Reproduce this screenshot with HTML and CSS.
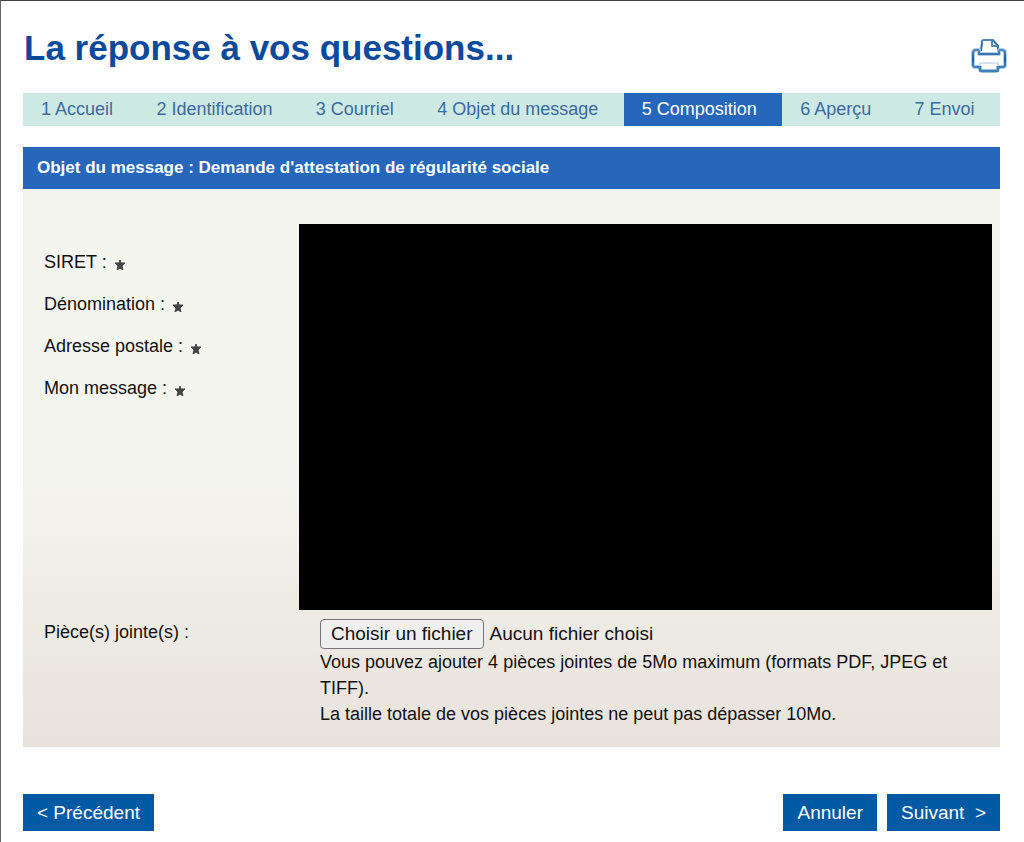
FILE: index.html
```html
<!DOCTYPE html>
<html lang="fr">
<head>
    <meta charset="UTF-8">
    <meta name="viewport" content="width=device-width, initial-scale=1.0">
    <title>La réponse à vos questions...</title>
    <link rel="stylesheet" href="styles.css">
</head>
<body>

    <div class="header">
        <h1>La réponse à vos questions...</h1>
        <button type="button" class="print" aria-label="Imprimer" onclick="window.print()">
            <svg width="36" height="36" viewBox="0 0 36 36" fill="none" stroke-linejoin="round">
                <defs>
                    <linearGradient id="ink" x1="0" y1="0" x2="0" y2="1">
                        <stop offset="0" stop-color="#5187bb"/>
                        <stop offset="0.5" stop-color="#1e609c"/>
                        <stop offset="1" stop-color="#3f80b8"/>
                    </linearGradient>
                </defs>
                <path d="M10 13 L11 4 Q11 2 13 2 H22 L27 8 V13" fill="#fff" stroke="url(#ink)" stroke-width="2"/>
                <path d="M21 3 V8 H27" stroke="#5187bb" stroke-width="2"/>
                <path d="M9 29 H4 Q2 29 2 27 V15 Q2 12 5 12 H7 Q8 12 8 14 V16 H28 V14 Q28 12 29 12 H31 Q34 12 34 15 V27 Q34 29 32 29 H27" stroke="#b4cfe6" stroke-width="4"/>
                <path d="M9 29 H4 Q2 29 2 27 V15 Q2 12 5 12 H7 Q8 12 8 14 V16 H28 V14 Q28 12 29 12 H31 Q34 12 34 15 V27 Q34 29 32 29 H27" stroke="url(#ink)" stroke-width="2"/>
                <path d="M9 25 H27 V31 Q27 33 25 33 H11 Q9 33 9 31 Z" fill="#fff" stroke="#a9c6de" stroke-width="1"/>
                <path d="M9 28 V31 Q9 33 11 33 H25 Q27 33 27 31 V28" stroke="#3f80b8" stroke-width="3"/>
            </svg>
        </button>
    </div>

    <div class="content">
        <ol class="steps">
            <li>1 Accueil</li>
            <li>2 Identification</li>
            <li>3 Courriel</li>
            <li>4 Objet du message</li>
            <li class="active" aria-current="step">5 Composition</li>
            <li>6 Aperçu</li>
            <li>7 Envoi</li>
        </ol>

        <form>
            <h2>Objet du message : Demande d'attestation de régularité sociale</h2>
            <div class="panel">
                <ul class="labels">
                    <li>SIRET : <svg class="star" viewBox="0 0 10 10"><path d="M5 0 L6 3 L10 3 L7 6 L8 10 L5 8 L2 10 L3 6 L0 3 L4 3 Z"/></svg></li>
                    <li>Dénomination : <svg class="star" viewBox="0 0 10 10"><path d="M5 0 L6 3 L10 3 L7 6 L8 10 L5 8 L2 10 L3 6 L0 3 L4 3 Z"/></svg></li>
                    <li>Adresse postale : <svg class="star" viewBox="0 0 10 10"><path d="M5 0 L6 3 L10 3 L7 6 L8 10 L5 8 L2 10 L3 6 L0 3 L4 3 Z"/></svg></li>
                    <li>Mon message : <svg class="star" viewBox="0 0 10 10"><path d="M5 0 L6 3 L10 3 L7 6 L8 10 L5 8 L2 10 L3 6 L0 3 L4 3 Z"/></svg></li>
                </ul>
                <div class="masked"></div>

                <label class="file-label" for="piece">Pièce(s) jointe(s) :</label>
                <div class="file">
                    <div class="file-row">
                        <input type="file" id="piece" class="file-input">
                        <label for="piece" class="file-button">Choisir un fichier</label>
                        <span id="file-name">Aucun fichier choisi</span>
                    </div>
                    <p>Vous pouvez ajouter 4 pièces jointes de 5Mo maximum (formats PDF, JPEG et TIFF).</p>
                    <p>La taille totale de vos pièces jointes ne peut pas dépasser 10Mo.</p>
                </div>
            </div>

            <div class="actions">
                <button type="button">&lt; Précédent</button>
                <button type="button" class="cancel">Annuler</button>
                <button type="submit">Suivant &nbsp;&gt;</button>
            </div>
        </form>
    </div>

    <script>
        // Show the name of the chosen file next to the button
        document.getElementById('piece').addEventListener('change', function() {
            let name = this.files.length ? this.files[0].name : 'Aucun fichier choisi';
            document.getElementById('file-name').textContent = name;
        });
    </script>

</body>
</html>
```
FILE: styles.css
```css
* {
    margin: 0;
    padding: 0;
    box-sizing: border-box;
}
body {
    font-family: "Liberation Sans", Arial, sans-serif;
    font-size: 18px;
    line-height: 26px;
    color: #111;
    background-color: #fff;
    min-height: 100vh;
    border-top: 1px solid #444;
    border-left: 1px solid #666;
}
.header {
    display: flex;
    justify-content: space-between;
    align-items: flex-start;
    padding: 27px 17px 0 23px;
    height: 92px;
}
h1 {
    color: #0c4a9c;
    font-size: 35px;
    line-height: 40px;
}
.print {
    background: none;
    border: none;
    cursor: pointer;
    margin-top: 10px;
    height: 36px;
}
.content {
    padding: 0 24px 0 22px;
}
.steps {
    display: flex;
    list-style: none;
    background-color: #cde9e3;
    color: #3d6a9f;
    margin-bottom: 21px;
}
.steps li {
    flex: auto;
    padding: 0 23px 0 18px;
    line-height: 33px;
    white-space: nowrap;
}
.steps .active {
    background-color: #2666bb;
    color: #fff;
}
h2 {
    background-color: #2666bb;
    color: #fff;
    font-size: 17px;
    line-height: 42px;
    padding: 0 14px;
}
.panel {
    display: grid;
    grid-template-columns: 255px 1fr;
    padding: 35px 8px 20px 21px;
    background: linear-gradient(#f5f5f0 50%, #e8e2db);
}
.labels {
    list-style: none;
    padding-top: 17px;
}
.labels li {
    line-height: 42px;
}
.star {
    width: 10px;
    height: 10px;
    margin-left: 3px;
    vertical-align: -2px;
    fill: #444;
    stroke: #444;
}
.masked {
    background-color: #000;
    height: 386px;
}
.file-label {
    padding-top: 9px;
}
.file {
    padding: 9px 0 0 21px;
}
.file-row {
    display: flex;
    align-items: center;
    gap: 6px;
    font-size: 19px;
}
.file-input {
    position: absolute;
    width: 1px;
    height: 1px;
    opacity: 0;
}
.file-button {
    background-color: #efefef;
    border: 1px solid #767676;
    border-radius: 4px;
    line-height: 28px;
    padding: 0 10px;
    cursor: pointer;
}
.actions {
    display: flex;
    gap: 10px;
    margin: 47px 0 11px;
}
.actions button {
    background-color: #005aa3;
    color: #fff;
    border: none;
    font-family: inherit;
    font-size: 19px;
    line-height: 37px;
    padding: 0 14px;
    cursor: pointer;
}
.actions .cancel {
    margin-left: auto;
}
```
